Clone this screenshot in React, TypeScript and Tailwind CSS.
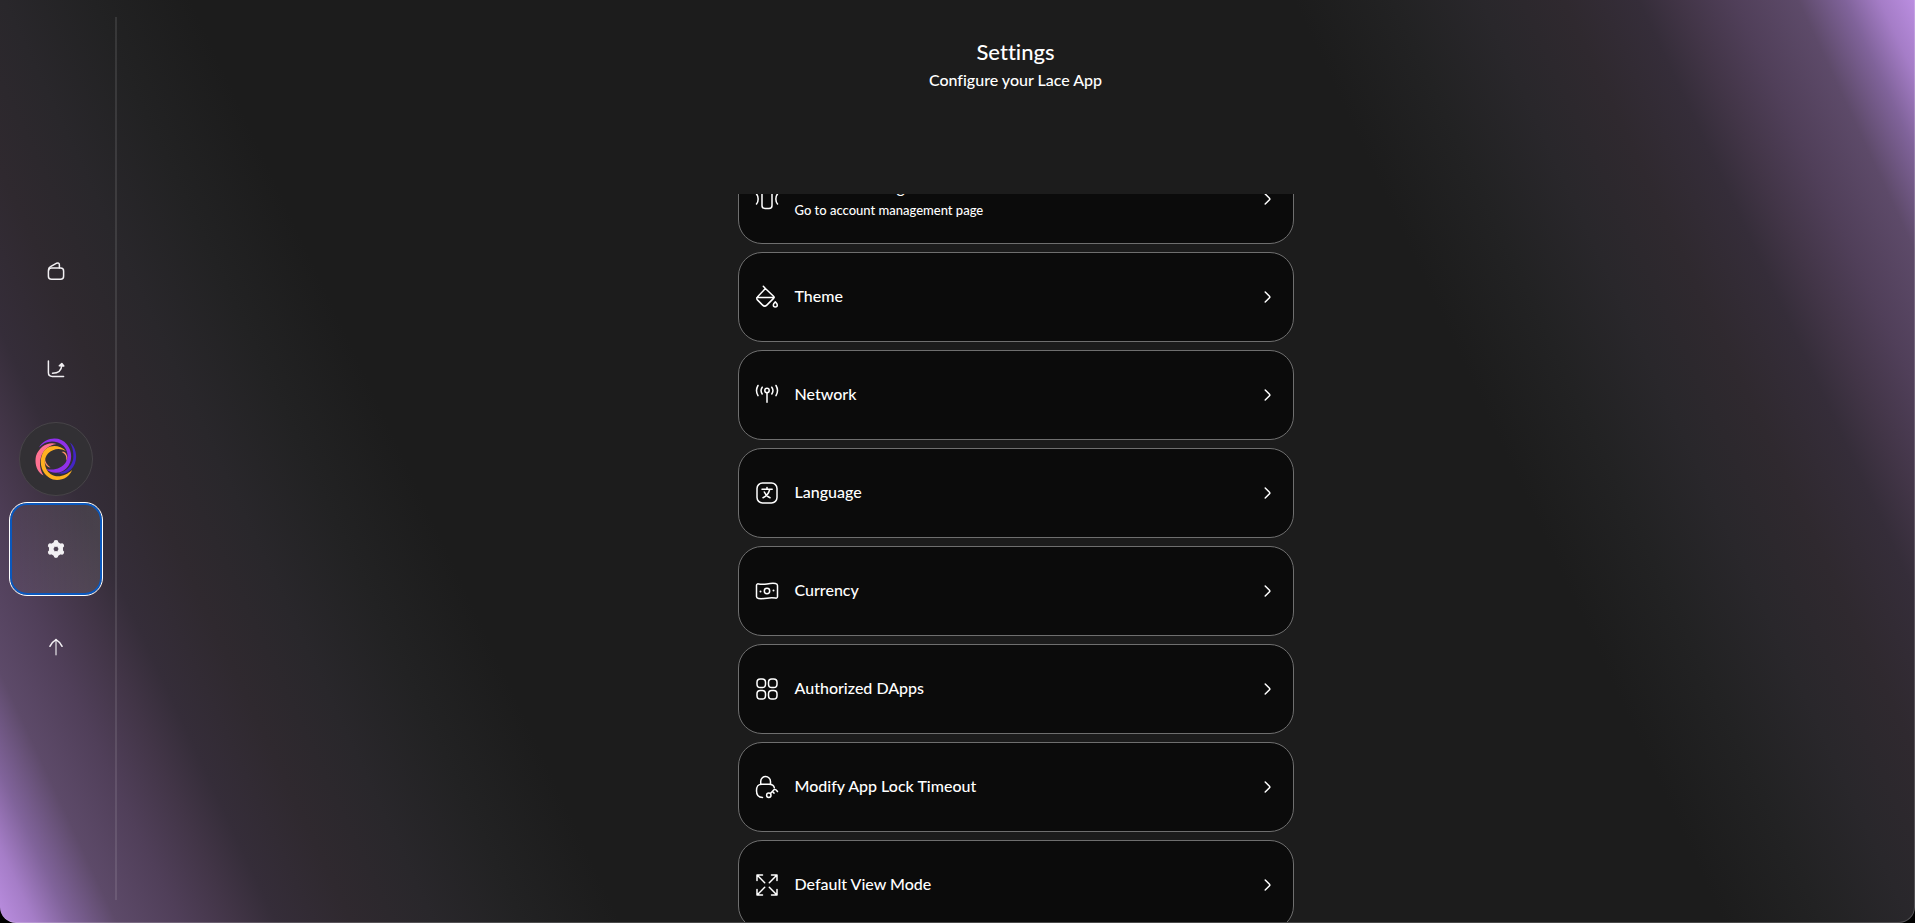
import React, { useLayoutEffect, useRef } from "react";

type IconProps = { children: React.ReactNode };

function Icon({ children }: IconProps) {
  return (
    <svg viewBox="0 0 24 24" fill="none" stroke="currentColor" strokeWidth="1.5" strokeLinecap="round" strokeLinejoin="round" className="size-6 shrink-0" aria-hidden="true">
      {children}
    </svg>
  );
}

function NavIcon({ children }: IconProps) {
  return (
    <svg viewBox="0 0 20 20" fill="none" stroke="currentColor" strokeWidth="1.5" strokeLinecap="round" strokeLinejoin="round" className="size-5 shrink-0" aria-hidden="true">
      {children}
    </svg>
  );
}

const accounts = (
  <Icon>
    <path d="M7 2.500v16a3 3 0 0 0 3 3h4a3 3 0 0 0 3-3v-16M1.500 7c2.200 2.500 2.200 7.500 0 10M22.500 7c-2.200 2.500-2.200 7.500 0 10" />
  </Icon>
);
const theme = (
  <Icon>
    <path d="M8.300 1.300l2.100 2.200M10.400 3.500l8.400 8a1 1 0 0 1 0 1.600l-7 7a3 3 0 0 1-4.200 0l-5.200-5.200a2 2 0 0 1 0-2.900zM1.800 12.600h17.400" />
    <path d="M20.300 16.900c1.300 1.200 2 2.100 2 3.200a2 2 0 0 1-4 0c0-1.100.7-2 2-3.200z" />
  </Icon>
);
const network = (
  <Icon>
    <circle cx="12" cy="7.500" r="2.200" />
    <path d="M12 10v9.300M7.200 4.200a6 6 0 0 0 0 6.800M16.800 4.200a6 6 0 0 1 0 6.800M3 2.500a10 10 0 0 0 0 10.200M21 2.500a10 10 0 0 1 0 10.200" />
  </Icon>
);
const language = (
  <Icon>
    <rect x="2" y="2" width="20" height="20" rx="5.500" />
    <path d="M7 8.300h10.200M12 6.600v1.700M14.700 8.500c-1 3.900-3.300 6.800-6.700 8.300M9.300 11c1.300 2.800 3.100 4.800 5.700 5.800" />
  </Icon>
);
const currency = (
  <Icon>
    <path d="M1.500 6.600c0-1.200.8-1.900 2-1.700 3 .6 5.500.5 8.500 0s5.500-.8 8.500-.4c1.300.2 2 .9 2 2v10.900c0 1.200-.8 1.900-2 1.700-3-.5-5.500-.4-8.500.1s-5.500.8-8.500.4c-1.300-.2-2-.9-2-2z" />
    <circle cx="12" cy="12" r="2.700" />
    <path d="M5.500 12.400v.1M18.500 11.500v.1" strokeWidth="2" />
  </Icon>
);
const dapps = (
  <Icon>
    <rect x="2" y="2" width="8.500" height="8.500" rx="3.300" />
    <rect x="13.500" y="2" width="8.500" height="8.500" rx="3.300" />
    <rect x="2" y="13.500" width="8.500" height="8.500" rx="3.300" />
    <rect x="13.500" y="13.500" width="8.500" height="8.500" rx="3.300" />
  </Icon>
);
const lock = (
  <Icon>
    <path d="M5.700 9V6.400a4.900 4.900 0 0 1 9.800 0V9M7.500 22.500c-4 0-6-1.500-6-6.700C1.500 11.300 2.700 9.200 7 9.200h7c3.200 0 4.800 1 5.300 3.400" />
    <circle cx="13.800" cy="20.200" r="2.200" />
    <path d="M15.400 18.600l4-4.300c1.300 0 2.200.8 3.100 2.200M17.400 16.500l1.700 1.600" />
  </Icon>
);
const expand = (
  <Icon>
    <path d="M2 7.500V2h5.500M2.300 2.300l7.400 7.400M16.500 2H22v5.500M21.700 2.300l-7.400 7.400M2 16.500V22h5.500M2.300 21.700l7.400-7.400M16.500 22H22v-5.500M21.700 21.700l-7.400-7.400" />
  </Icon>
);

const items: { title: string; note?: string; icon: React.ReactNode }[] = [
  { title: "Account Management", note: "Go to account management page", icon: accounts },
  { title: "Theme", icon: theme },
  { title: "Network", icon: network },
  { title: "Language", icon: language },
  { title: "Currency", icon: currency },
  { title: "Authorized DApps", icon: dapps },
  { title: "Modify App Lock Timeout", icon: lock },
  { title: "Default View Mode", icon: expand },
];

function Logo() {
  return (
    <svg viewBox="0 0 42 42" fill="none" className="size-[42px]" aria-hidden="true">
      <path d="M35 4.500C43 11 43 25 36 31.500C32 35.500 27 36.500 22.500 35C30 34.500 36 29 38 22C39 16 38 10 35 4.500Z" fill="#4325c4" />
      <path d="M21.500 6C13 3 4 9 1 18C-1 27 3 35 8.500 37.500C5 32 4 25 6 19C8 12 14 7 21.500 6Z" fill="#ff7292" />
      <path d="M31 23C32 19 31 16 26.500 14C30 13 32 16 32.500 20ZM10 20C10 24 12 27 15.500 29.500C11 29 9 25 10 20Z" fill="#ff9068" />
      <path d="M4 9.500C10-1 25-2.500 32 6.500C39 15 37 29 27 33.500C21 36 15 34.500 10.500 31C20 33 27 30 31 24C35 16 31 7.500 23 4.500C15 2 9 4.500 4 9.500Z" fill="#9030ea" />
      <path d="M31 13C23 5 10 7 7 17C2.500 29 11 42 22 42C29 42 35 38 37 32C31 38 22 40.500 15.500 36C9 31 8 21 13 15.500C18 10.500 25 9.500 31 13Z" fill="#ffb020" />
    </svg>
  );
}

const navButton = "flex size-[94px] items-center justify-center rounded-[18px] text-[#f2f0f3]";

export default function App() {
  const scroller = useRef<HTMLDivElement>(null);

  useLayoutEffect(() => {
    scroller.current?.scrollTo(0, 40);
  }, []);

  return (
    <div className="bg-black">
      <div className="flex h-screen overflow-hidden rounded-b-2xl border-r border-b border-white/20 bg-[linear-gradient(65deg,#bb8ee1_0%,#a57dc7_1.500%,#80639a_3%,#5d4a69_5%,#503f59_7.700%,#423547_10%,#352d39_11.800%,#2f292f_15%,#29272b_18.500%,#222223_22.300%,#1c1c1c_26.500%,#1c1c1c_73.500%,#222223_77.700%,#29272b_81.500%,#2f292f_85%,#352d39_88.200%,#423547_90%,#503f59_92.300%,#5d4a69_95%,#80639a_97%,#a57dc7_98.500%,#bb8ee1_100%)] bg-origin-border font-['Lato','Open_Sans',sans-serif] font-medium text-white [font-variant-ligatures:none]">
        <aside className="flex w-[115px] shrink-0 items-center pr-[3px] pb-1">
          <nav aria-label="Main" className="flex w-full flex-col items-center gap-1">
            <button aria-label="Wallet" className={navButton}>
              <NavIcon>
                <rect x="2.400" y="7" width="15.200" height="11.300" rx="3" />
                <path d="M2.600 9c0-1.500.5-2.600 1.900-3.300l6.200-3.500c1.400-.6 2.700.1 2.700 1.700V7" />
              </NavIcon>
            </button>
            <button aria-label="Activity" className={navButton}>
              <NavIcon>
                <path d="M2.400 1.900v11.600c0 2.600 1.300 3.900 3.900 3.900h11.300M6.500 14.300c5.500 0 9-3 9.300-8" />
                <path d="M13.300 6.700l2.500-2.200L17.800 7z" fill="currentColor" />
              </NavIcon>
            </button>
            <button aria-label="Home" className="my-0.5 flex size-[74px] items-center justify-center rounded-full border border-[#474448] bg-[#323034]">
              <Logo />
            </button>
            <button aria-label="Settings" aria-current="page" className="flex size-[94px] items-center justify-center rounded-[18px] border border-white bg-linear-to-r from-white/3 to-white/10 text-[#f2f0f3] ring-2 ring-[#0a58bd] ring-inset">
              <NavIcon>
                <circle cx="10" cy="10" r="5.100" strokeWidth="4" />
                <path d="M10 5.500V3.400M10 14.500v2.100M6.100 7.750L4.300 6.700M13.900 12.250l1.800 1.050M13.900 7.750l1.800-1.050M6.100 12.250l-1.800 1.050" strokeWidth="4.800" />
              </NavIcon>
            </button>
            <button aria-label="Expand" className={navButton}>
              <NavIcon>
                <path d="M10 17.700V2.600" strokeOpacity="0.75" />
                <path d="M3.900 9.300C5.500 6.200 7.700 3.900 10 2.600c2.300 1.300 4.500 3.600 6.100 6.700" />
              </NavIcon>
            </button>
          </nav>
        </aside>
        <div className="mt-[17px] mb-[22px] w-[2px] shrink-0 bg-white/10" />
        <main className="flex min-w-0 flex-1 flex-col">
          <header className="px-4 pt-9 pb-[102px] text-center">
            <h1 className="text-[22px] leading-8">Settings</h1>
            <p className="text-base leading-6">Configure your Lace App</p>
          </header>
          <div ref={scroller} className="min-h-0 flex-1 overflow-y-auto px-4 [scrollbar-width:none]">
            <ul className="mx-auto flex max-w-[556px] flex-col gap-2">
              {items.map((item) => (
                <li key={item.title}>
                  <button className="flex h-[90px] w-full items-center gap-4 rounded-3xl border border-[#6f6f6f] bg-[#0b0b0b] pr-[14px] pl-4 text-left">
                    {item.icon}
                    <span className="min-w-0 flex-1 pb-0.5">
                      <span className="block text-base leading-6">{item.title}</span>
                      {item.note && <span className="block text-[13px] leading-[22px]">{item.note}</span>}
                    </span>
                    <Icon>
                      <path d="M10.200 7l4.300 4.200c.5.500.5 1.100 0 1.600L10.200 17" />
                    </Icon>
                  </button>
                </li>
              ))}
            </ul>
          </div>
        </main>
      </div>
    </div>
  );
}
